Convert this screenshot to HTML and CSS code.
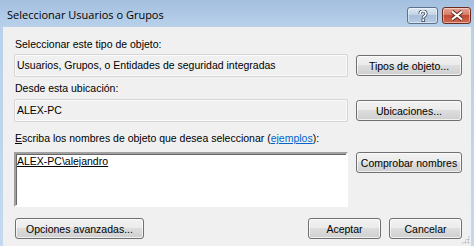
FILE: index.html
```html
<!DOCTYPE html>
<html lang="es">
<head>
    <meta charset="UTF-8">
    <title>Seleccionar Usuarios o Grupos</title>
    <link rel="stylesheet" href="styles.css">
</head>
<body>
    <div class="window">
        <!-- Title bar -->
        <div class="titlebar">
            <span class="title">Seleccionar Usuarios o Grupos</span>
            <div class="caption-btns">
                <div class="cap-btn help">
                    <svg width="12" height="12" viewBox="0 0 12 12">
                        <path d="M3 4 Q3 1 6 1 Q9 1 9 3.8 Q9 5.4 7.2 6.2 Q6.3 6.6 6.3 7.8" fill="none" stroke="#3d4a5a" stroke-width="3.2" stroke-linecap="butt"/>
                        <path d="M3 4 Q3 1 6 1 Q9 1 9 3.8 Q9 5.4 7.2 6.2 Q6.3 6.6 6.3 7.8" fill="none" stroke="#fff" stroke-width="1.6"/>
                        <rect x="4.9" y="8.8" width="2.8" height="2.8" fill="#fff" stroke="#3d4a5a" stroke-width="0.8"/>
                    </svg>
                </div>
                <div class="cap-btn close">
                    <svg width="14" height="11" viewBox="0 0 14 11">
                        <path d="M2 1.5 L12 9.5 M12 1.5 L2 9.5" stroke="#5c2a22" stroke-width="4"/>
                        <path d="M2 1.5 L12 9.5 M12 1.5 L2 9.5" stroke="#fff" stroke-width="2.2"/>
                    </svg>
                </div>
            </div>
        </div>

        <!-- Dialog body -->
        <div class="client">
            <div class="label label-type">Seleccionar este tipo de objeto:</div>
            <div class="row row-type">
                <div class="field readonly">Usuarios, Grupos, o Entidades de seguridad integradas</div>
                <button class="btn">Tipos de objeto...</button>
            </div>

            <div class="label">Desde esta ubicación:</div>
            <div class="row row-location">
                <div class="field readonly">ALEX-PC</div>
                <button class="btn">Ubicaciones...</button>
            </div>

            <div class="label label-names"><u>E</u>scriba los nombres de objeto que desea seleccionar (<a href="#" class="link">ejemplos</a>):</div>
            <div class="row row-names">
                <div class="field names"><u>ALEX-PC\alejandro</u></div>
                <button class="btn">Comprobar nombres</button>
            </div>

            <div class="footer">
                <button class="btn wide">Opciones avanzadas...</button>
                <div class="footer-right">
                    <button class="btn small">Aceptar</button>
                    <button class="btn small">Cancelar</button>
                </div>
            </div>
            <div class="grip"></div>
        </div>
    </div>
</body>
</html>
```

FILE: styles.css
```css
* {
    margin: 0;
    padding: 0;
    box-sizing: border-box;
}

body {
    width: 474px;
    height: 246px;
    overflow: hidden;
    font-family: 'Liberation Sans', Arial, sans-serif;
    font-size: 10.5px;
    color: #000;
}

/* Window frame */
.window {
    width: 474px;
    height: 246px;
    background: linear-gradient(180deg, #a3bfdf 0px, #b9d1ea 27px, #c4d9ee 100%);
    display: flex;
    flex-direction: column;
}

.titlebar {
    height: 27px;
    display: flex;
    align-items: flex-start;
    justify-content: space-between;
    padding-left: 7px;
    padding-right: 3px;
}

.title {
    font-family: 'Open Sans', 'Liberation Sans', sans-serif;
    font-size: 11px;
    margin-top: 7px;
    color: #000;
}

.caption-btns {
    display: flex;
    gap: 4px;
    margin-top: 7px;
}

.cap-btn {
    height: 17px;
    border: 1px solid #5e7188;
    border-radius: 3px;
    display: flex;
    align-items: center;
    justify-content: center;
    box-shadow: inset 0 0 0 1px rgba(255, 255, 255, 0.45);
}

.cap-btn.help {
    width: 31px;
    background: linear-gradient(180deg, #dce7f3 0%, #c3d4e8 45%, #a9bfd9 50%, #b5cbe3 100%);
}

.cap-btn.close {
    width: 29px;
    border-color: #6a2b24;
    background: linear-gradient(180deg, #e8a493 0%, #d57d68 45%, #c24b35 50%, #cf6a4f 100%);
}

/* Client area */
.client {
    position: relative;
    flex: 1;
    margin: 0 3px;
    background: #f0f0f0;
    padding: 11px 9px 0 11px;
    display: flex;
    flex-direction: column;
}

.label {
    height: 13px;
    line-height: 13px;
    margin-bottom: 4px;
    padding-left: 1px;
    white-space: nowrap;
}

.label-type {
    margin-bottom: 3px;
}

.label-names {
    margin-bottom: 7px;
}

.link {
    color: #0066cc;
}

.row {
    display: flex;
    align-items: center;
    gap: 8px;
}

.row-type {
    margin-bottom: 5px;
}

.row-location {
    margin-bottom: 10px;
}

.row-names {
    align-items: flex-start;
    margin-bottom: 11px;
}

.field {
    width: 334px;
    height: 23px;
    padding: 0 2px;
    line-height: 21px;
    white-space: nowrap;
    overflow: hidden;
}

.field.readonly {
    background: #f0f0f0;
    border: 1px solid #d5d5d5;
    border-radius: 2px;
    box-shadow: inset 0 0 0 1px #fafafa;
}

.field.names {
    height: 55px;
    background: #fff;
    border: 2px solid;
    border-color: #a0a0a0 #fff #fff #a0a0a0;
    box-shadow: inset 1px 1px 0 #696969;
    padding: 1px 1px;
    line-height: 13px;
}

.btn {
    width: 106px;
    height: 21px;
    font-family: 'Liberation Sans', Arial, sans-serif;
    font-size: 10.5px;
    color: #000;
    border: 1px solid #707070;
    border-radius: 3px;
    background: linear-gradient(180deg, #f2f2f2 0%, #ebebeb 48%, #dddddd 50%, #cfcfcf 100%);
    box-shadow: inset 0 0 0 1px rgba(255, 255, 255, 0.7);
}

.btn.wide {
    width: 129px;
    margin-left: 1px;
}

.btn.small {
    width: 73px;
}

.footer {
    display: flex;
    justify-content: space-between;
}

.footer-right {
    display: flex;
    gap: 8px;
}

.grip {
    position: absolute;
    right: 1px;
    bottom: 2px;
    width: 9px;
    height: 9px;
    background:
        radial-gradient(circle, #b8b8b8 0.8px, transparent 1.2px) 0 0 / 3px 3px;
    clip-path: polygon(100% 0, 100% 100%, 0 100%);
}
```
